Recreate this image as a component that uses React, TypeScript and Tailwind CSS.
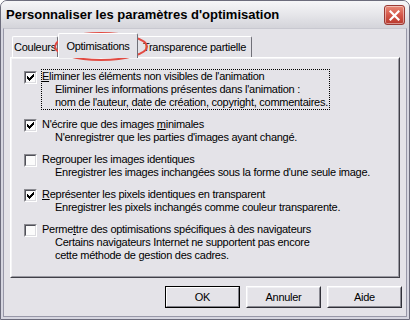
import React from "react";

const options = [
  {
    checked: true,
    focus: true,
    label: (
      <>
        <u>E</u>liminer les éléments non visibles de l'animation
      </>
    ),
    lines: [
      "Eliminer les informations présentes dans l'animation  :",
      "nom de l'auteur, date de création, copyright, commentaires.",
    ],
  },
  {
    checked: true,
    label: (
      <>
        N'écrire que des images <u>m</u>inimales
      </>
    ),
    lines: ["N'enregistrer que les parties d'images ayant changé."],
  },
  {
    checked: false,
    label: <>Regrouper les images identiques</>,
    lines: ["Enregistrer les images inchangées sous la forme d'une seule image."],
  },
  {
    checked: true,
    label: (
      <>
        <u>R</u>eprésenter les pixels identiques en transparent
      </>
    ),
    lines: ["Enregistrer les pixels inchangés comme couleur transparente."],
  },
  {
    checked: false,
    label: (
      <>
        Perme<u>t</u>tre des optimisations spécifiques à des navigateurs
      </>
    ),
    lines: [
      "Certains navigateurs Internet ne supportent pas encore",
      "cette méthode de gestion des cadres.",
    ],
  },
];

const Check = ({ checked }: { checked: boolean }) => (
  <div className="mt-px h-[13px] w-[13px] shrink-0 border border-t-[#8a8a90] border-l-[#8a8a90] border-r-white border-b-white">
    <div className="flex h-full w-full items-center justify-center border border-t-[#505058] border-l-[#505058] border-r-[#dcdce0] border-b-[#dcdce0] bg-[#fbfbfb]">
      {checked && (
        <svg width="7" height="7" viewBox="0 0 7 7" shapeRendering="crispEdges">
          <path
            d="M6 0h1v3h-1zM5 1h1v3h-1zM4 2h1v3h-1zM3 3h1v3h-1zM2 4h1v3h-1zM1 3h1v3h-1zM0 2h1v3h-1z"
            fill="#000"
          />
        </svg>
      )}
    </div>
  </div>
);

const Button = ({ label, isDefault }: { label: string; isDefault?: boolean }) =>
  isDefault ? (
    <div className="h-[22px] w-[75px] border border-black">
      <div className="flex h-full w-full items-center justify-center border border-t-white border-l-white border-r-[#808088] border-b-[#808088] bg-[#e4e3e8]">
        {label}
      </div>
    </div>
  ) : (
    <div className="h-[22px] w-[75px] border border-t-white border-l-white border-r-[#303038] border-b-[#303038]">
      <div className="flex h-full w-full items-center justify-center border border-t-[#f0f0f4] border-l-[#f0f0f4] border-r-[#8a8a92] border-b-[#8a8a92] bg-[#e4e3e8]">
        {label}
      </div>
    </div>
  );

export default function App() {
  return (
    <div className="relative flex h-[320px] w-[410px] flex-col overflow-hidden rounded-t-[7px] border border-[#6c6c7c] bg-[#e4e3e8] font-['Liberation_Sans',Arial,sans-serif] text-[11px] leading-[13px] tracking-[-0.27px] text-black">
      {/* barre de titre */}
      <div className="flex h-[27px] shrink-0 items-center justify-between bg-gradient-to-b from-[#f6f6f8] via-[#e6e6ea] to-[#d4d4da] pl-[5px] pr-[4px]">
        <span className="text-[13px] font-bold tracking-normal">
          Personnaliser les paramètres d'optimisation
        </span>
        <div className="mt-px flex h-[20px] w-[21px] items-center justify-center rounded-[3px] border border-[#9a3a34] bg-gradient-to-b from-[#e88a78] via-[#d4574a] to-[#b8382c] shadow-[inset_0_0_0_1px_rgba(255,255,255,0.45)]">
          <svg width="11" height="11" viewBox="0 0 11 11">
            <path d="M1.5 1.5l8 8M9.5 1.5l-8 8" stroke="#fff" strokeWidth="2.2" strokeLinecap="square" />
          </svg>
        </div>
      </div>

      {/* corps */}
      <div className="flex flex-1 flex-col border-x-2 border-b-2 border-[#d6d6e0]">
        <div className="flex flex-1 flex-col border-x border-b border-[#9898a8] border-t border-t-[#c8c8d0]">
          {/* onglets */}
          <div className="ml-[6px] mt-[4px] flex h-[24px] items-end pl-[2px]">
            <div className="flex h-[21px] w-[46px] items-center justify-center rounded-t-[2px] border-l border-t border-r border-l-white border-t-white border-r-[#707078]">
              Couleurs
            </div>
            <div className="relative z-10 -mb-px flex h-[25px] w-[80px] items-start justify-center rounded-t-[2px] border-l border-t border-r border-l-white border-t-white border-r-[#707078] bg-[#e4e3e8] pt-[6px]">
              Optimisations
            </div>
            <div className="flex h-[21px] w-[114px] items-center justify-center rounded-t-[2px] border-t border-r border-t-white border-r-[#707078]">
              Transparence partielle
            </div>
          </div>

          {/* panneau */}
          <div className="mx-[6px] h-[221px] border border-t-white border-l-white border-r-[#404048] border-b-[#404048]">
            <div className="flex h-full flex-col gap-[9px] border border-t-[#f4f4f6] border-l-[#f4f4f6] border-r-[#9a9aa2] border-b-[#9a9aa2] pl-[12px] pt-[11px]">
              {options.map((o, i) => (
                <div key={i} className="flex items-start gap-[5px]">
                  <Check checked={o.checked} />
                  <div className={o.focus ? "outline-1 outline-dotted outline-black" : ""}>
                    <div className="whitespace-nowrap">{o.label}</div>
                    {o.lines.map((l) => (
                      <div key={l} className="whitespace-nowrap pl-[13px] pr-px">
                        {l}
                      </div>
                    ))}
                  </div>
                </div>
              ))}
            </div>
          </div>

          {/* boutons */}
          <div className="mr-[4px] mt-[8px] flex justify-end gap-[6px]">
            <Button label="OK" isDefault />
            <Button label="Annuler" />
            <Button label="Aide" />
          </div>
        </div>
      </div>

      {/* cercle rouge d'annotation */}
      <svg className="pointer-events-none absolute left-[52px] top-[30px]" width="96" height="31" viewBox="0 0 96 31">
        <ellipse cx="48" cy="15.5" rx="46" ry="13.5" fill="none" stroke="#e24a42" strokeWidth="2" />
      </svg>
    </div>
  );
}
